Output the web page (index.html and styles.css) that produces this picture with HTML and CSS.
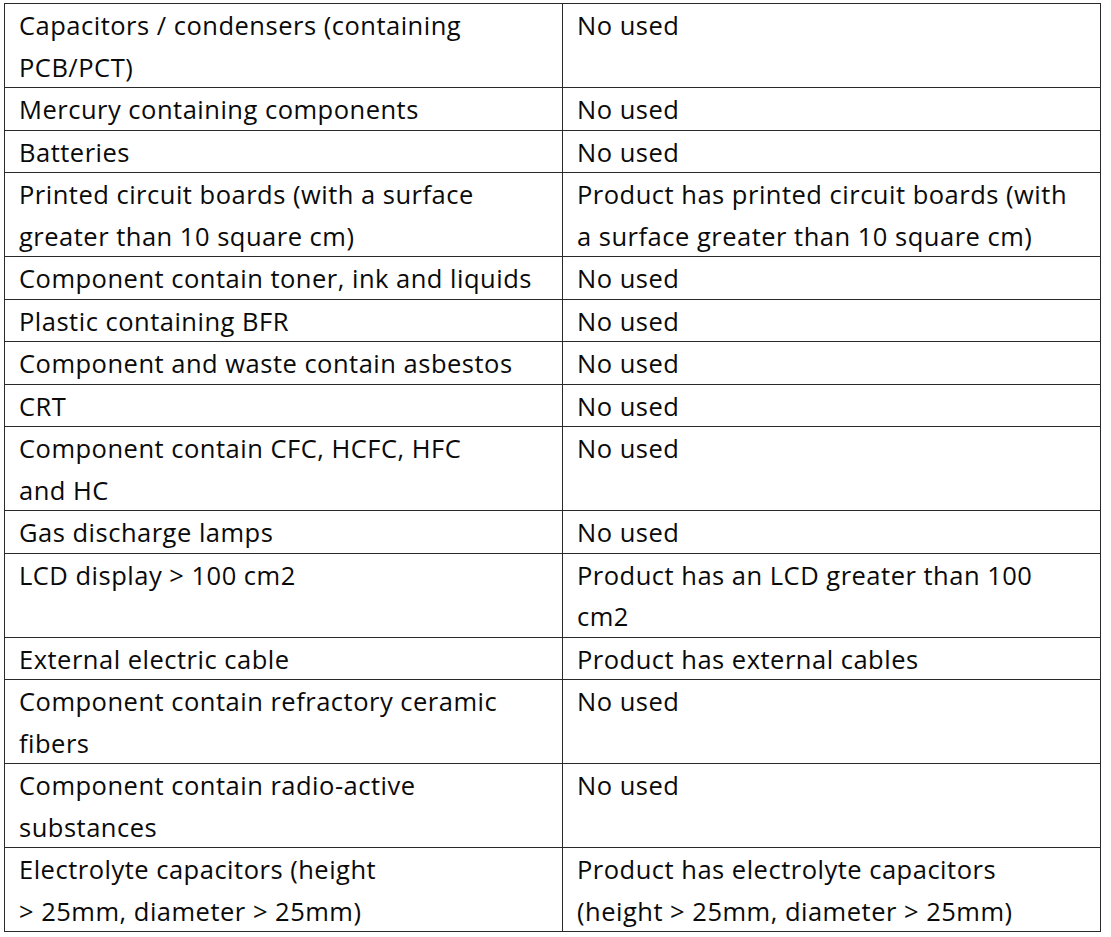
FILE: index.html
```html
<!DOCTYPE html>
<html>
<head>
<meta charset="utf-8">
<link rel="stylesheet" href="styles.css">
</head>
<body>
<table class="grid">
  <colgroup><col class="c1"><col class="c2"></colgroup>
  <tbody>
    <tr><td><div class="t">Capacitors / condensers (containing<br>PCB/PCT)</div></td><td><div class="t">No used</div></td></tr>
    <tr><td><div class="t">Mercury containing components</div></td><td><div class="t">No used</div></td></tr>
    <tr><td><div class="t">Batteries</div></td><td><div class="t">No used</div></td></tr>
    <tr><td><div class="t">Printed circuit boards (with a surface<br>greater than 10 square cm)</div></td><td><div class="t">Product has printed circuit boards (with<br>a surface greater than 10 square cm)</div></td></tr>
    <tr><td><div class="t">Component contain toner, ink and liquids</div></td><td><div class="t">No used</div></td></tr>
    <tr><td><div class="t">Plastic containing BFR</div></td><td><div class="t">No used</div></td></tr>
    <tr><td><div class="t">Component and waste contain asbestos</div></td><td><div class="t">No used</div></td></tr>
    <tr><td><div class="t">CRT</div></td><td><div class="t">No used</div></td></tr>
    <tr><td><div class="t">Component contain CFC, HCFC, HFC<br>and HC</div></td><td><div class="t">No used</div></td></tr>
    <tr><td><div class="t">Gas discharge lamps</div></td><td><div class="t">No used</div></td></tr>
    <tr><td><div class="t">LCD display &gt; 100 cm2</div></td><td><div class="t">Product has an LCD greater than 100<br>cm2</div></td></tr>
    <tr><td><div class="t">External electric cable</div></td><td><div class="t">Product has external cables</div></td></tr>
    <tr><td><div class="t">Component contain refractory ceramic<br>fibers</div></td><td><div class="t">No used</div></td></tr>
    <tr><td><div class="t">Component contain radio-active<br>substances</div></td><td><div class="t">No used</div></td></tr>
    <tr><td><div class="t">Electrolyte capacitors (height<br>&gt; 25mm, diameter &gt; 25mm)</div></td><td><div class="t">Product has electrolyte capacitors<br>(height &gt; 25mm, diameter &gt; 25mm)</div></td></tr>
  </tbody>
</table>
</body>
</html>
```
FILE: styles.css
```css
html, body {
  margin: 0;
  padding: 0;
  background: #ffffff;
}
body {
  padding: 3px 0 0 4px;
}
.grid {
  border-collapse: collapse;
  width: 1096px;
  table-layout: fixed;
  font-family: "Open Sans", "Liberation Sans", sans-serif;
  font-size: 25.5px;
  letter-spacing: 0.5px;
  color: #0a0a0a;
}
.c1 { width: 558px; }
.c2 { width: 538px; }
.grid td {
  border: 1px solid #2a2a2a;
  padding: 0 8px 0 14px;
  vertical-align: top;
  white-space: nowrap;
}
.t {
  line-height: 41.5px;
  padding-top: 1px;
  margin-bottom: -1px;
}
```
